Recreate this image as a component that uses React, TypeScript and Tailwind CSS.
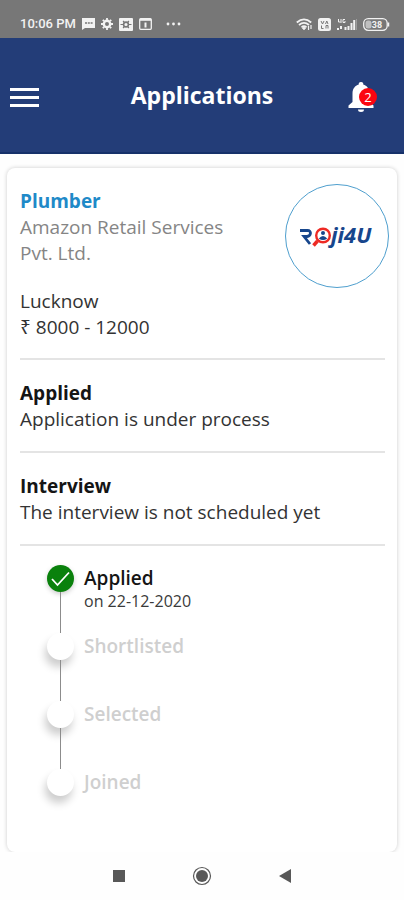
import type { ReactNode } from "react";

const steps = [
  { title: "Applied", note: "on 22-12-2020", done: true },
  { title: "Shortlisted", note: "", done: false },
  { title: "Selected", note: "", done: false },
  { title: "Joined", note: "", done: false },
];

function StatusBar() {
  return (
    <div className="flex h-[38px] flex-none items-center bg-[#777777] pt-2.5 pr-3.5 pl-5 font-['Roboto',sans-serif] text-[#f2f2f2]">
      <span className="text-[13px] leading-4 font-medium">10:06 PM</span>
      <div className="ml-1.5 flex flex-1 items-center gap-1.5">
        <svg width="13" height="12" viewBox="0 0 13 12" aria-hidden>
          <path d="M0 0h13v10H3l-3 2z" fill="currentColor" />
          <path d="M3 5h2M5.8 5h2M8.6 5h2" stroke="#777777" strokeWidth="1.6" />
        </svg>
        <svg width="12" height="12" viewBox="0 0 12 12" fill="none" stroke="currentColor" aria-hidden>
          <circle cx="6" cy="6" r="3.2" strokeWidth="2.4" />
          <path d="M6 0v2M6 10v2M0 6h2M10 6h2M1.8 1.8l1.4 1.4M8.8 8.8l1.4 1.4M10.2 1.8L8.8 3.2M3.2 8.8l-1.4 1.4" strokeWidth="1.8" />
        </svg>
        <svg width="14" height="13" viewBox="0 0 14 13" aria-hidden>
          <rect width="14" height="13" rx="1" fill="currentColor" />
          <circle cx="7" cy="6.5" r="2.4" fill="none" stroke="#777777" strokeWidth="1.6" />
          <path d="M1.500 6.500h3M9.500 6.500h3M4 3l1.500 1.500M10 3L8.500 4.500M4 10l1.500-1.500M10 10L8.500 8.500" fill="none" stroke="#777777" strokeWidth="1.100" />
        </svg>
        <svg width="13" height="12" viewBox="0 0 13 12" fill="none" stroke="currentColor" aria-hidden>
          <rect x="0.7" y="0.7" width="11.6" height="10.6" rx="1" strokeWidth="1.3" />
          <path d="M1 1.8h11" strokeWidth="2" />
          <path d="M6.500 4.500v5" strokeWidth="2" />
        </svg>
        <svg className="ml-2" width="15" height="4" viewBox="0 0 15 4" fill="currentColor" aria-hidden>
          <circle cx="2" cy="2" r="1.4" />
          <circle cx="7.5" cy="2" r="1.4" />
          <circle cx="13" cy="2" r="1.4" />
        </svg>
      </div>
      <div className="flex items-center gap-[5px]">
        <svg width="17" height="13" viewBox="0 0 17 13" fill="none" stroke="currentColor" aria-hidden>
          <path d="M.8 4.500Q8 -1.800 15.200 4.500M3 7Q8 2.800 13 7M5.500 9.300Q8 7 10.500 9.300" strokeWidth="1.800" />
          <path d="M8 8.500l1.800 1.700L8 12l-1.800-1.800z" fill="currentColor" strokeWidth="0.5" />
          <path d="M12.500 8v4M15 7v4" strokeWidth="1.200" />
        </svg>
        <svg width="13" height="13" viewBox="0 0 13 13" aria-hidden>
          <rect width="13" height="13" rx="2.500" fill="currentColor" />
          <path d="M3 3l1.500 3L6 3M7.500 6l1.300-3L10 6M3.500 7.500v3h2M8 10.500v-3h2v3" fill="none" stroke="#777777" strokeWidth="1" />
        </svg>
        <svg width="21" height="13" viewBox="0 0 21 13" fill="none" stroke="currentColor" aria-hidden>
          <path d="M2.500 1v3h2M5 1v4M9 1.500H7v3h2V3" strokeWidth="1" />
          <path d="M2 10v2M5 8v3M9.500 9v3M12.500 8v4M15.500 5v7M18.200 2v10" strokeWidth="2" />
          <path d="M20.500 1v11" strokeWidth="1" opacity="0.300" />
        </svg>
        <svg width="28" height="13" viewBox="0 0 28 13" aria-hidden>
          <rect x="1.700" y="0.700" width="23.500" height="11.600" rx="4.500" fill="none" stroke="currentColor" strokeWidth="1.300" />
          <rect x="3.500" y="2.500" width="6" height="8" rx="2.500" fill="currentColor" opacity="0.600" />
          <path d="M26.500 4.500v4" stroke="currentColor" strokeWidth="1.500" />
          <text x="15" y="10" textAnchor="middle" fontSize="9" fontWeight="700" fill="currentColor">
            38
          </text>
        </svg>
      </div>
    </div>
  );
}

function Header() {
  return (
    <header className="grid h-[116px] flex-none grid-cols-[1fr_auto_1fr] items-center border-b-2 border-[#163169] bg-[#233d78] pr-6 pl-2.5 text-white">
      <button type="button" aria-label="Menu" className="flex w-[30px] flex-col gap-[5px] pt-1">
        <span className="h-[3px] w-[29px] bg-current" />
        <span className="h-[3px] w-[29px] bg-current" />
        <span className="h-[3px] w-[29px] bg-current" />
      </button>
      <h1 className="pl-3.5 text-[23px] leading-8 font-bold">Applications</h1>
      <button type="button" aria-label="Notifications, 2 unread" className="relative mt-1 h-8 w-8 justify-self-end">
        <svg width="32" height="32" viewBox="0 0 32 32" fill="currentColor" aria-hidden>
          <path d="M13 1a2.200 2.200 0 0 1 2.200 2.600C19 4.600 21.500 8 21.500 12.500v8.500l4 3.500V27H.5v-2.500l4-3.500v-8.500C4.500 8 7 4.600 10.800 3.600A2.200 2.200 0 0 1 13 1zM10 28.500h6a3 2.500 0 0 1-6 0z" />
        </svg>
        <span className="absolute top-[7px] left-[11px] flex h-[18px] w-[18px] items-center justify-center rounded-full bg-[#fb0510] text-[13px] leading-none">
          2
        </span>
      </button>
    </header>
  );
}

function CompanyLogo() {
  return (
    <div className="flex h-[104px] w-[104px] flex-none items-center justify-center rounded-full border border-[#4f9fce]">
      <svg width="84" height="40" viewBox="0 0 84 40" role="img" aria-label="Roji4U">
        <path d="M5 14.500h7.500c4.500 0 3.500 5.500-.5 6H9l6 7.500" fill="none" stroke="#17468c" strokeWidth="2.800" />
        <path d="M22.500 25l-4 4.500" stroke="#ee2a24" strokeWidth="3.500" />
        <circle cx="28" cy="19.500" r="6.800" fill="none" stroke="#ee2a24" strokeWidth="2.400" />
        <circle cx="28" cy="17" r="2" fill="#17468c" />
        <path d="M23.800 22.500q4.200-5 8.400 0q-4.200 3-8.400 0z" fill="#17468c" />
        <text x="36" y="27" className="font-['Open_Sans',sans-serif]" fontSize="22" fontWeight="700" fontStyle="italic" fill="#17468c">
          ji4U
        </text>
      </svg>
    </div>
  );
}

function Section({ title, children }: { title: string; children: ReactNode }) {
  return (
    <section className="mr-1 border-t-2 border-[#e4e4e4] pt-5 pb-[19px]">
      <h3 className="font-bold text-[#151515]">{title}</h3>
      <p>{children}</p>
    </section>
  );
}

function Timeline() {
  return (
    <ol className="mr-1 border-t-2 border-[#e4e4e4] pt-[19px] pl-[27px]">
      {steps.map((step, i) => (
        <li key={step.title} className="flex h-[68px] gap-2.5">
          <div className="flex w-[27px] flex-none flex-col items-center">
            <span
              className={`flex h-[27px] w-[27px] flex-none items-center justify-center rounded-full ${
                step.done ? "bg-[#0a810c] shadow-[0_2px_5px_rgba(0,0,0,0.2)]" : "bg-white shadow-[-2px_7px_8px_rgba(0,0,0,0.2)]"
              }`}
            >
              {step.done && (
                <svg width="20" height="16" viewBox="0 0 20 16" fill="none" stroke="white" strokeWidth="1.800" aria-hidden>
                  <path d="M1 8l5.500 6L18 1.500" />
                </svg>
              )}
            </span>
            {i < steps.length - 1 && <span className="w-px flex-1 bg-[#8c8c8c]" />}
          </div>
          <div>
            <p className={`leading-[26px] font-semibold ${step.done ? "text-[#151515]" : "text-[#cfcfcf]"}`}>
              {step.title}
            </p>
            {step.note && <p className="text-[16px] leading-5 text-[#3a3a3a]">{step.note}</p>}
          </div>
        </li>
      ))}
    </ol>
  );
}

function NavBar() {
  return (
    <nav className="flex h-12 flex-none items-center justify-center gap-[66px] bg-[#fefefe] text-[#585858]">
      <button type="button" aria-label="Recent apps">
        <svg width="14" height="14" viewBox="0 0 14 14" aria-hidden>
          <rect x="1" y="1" width="12" height="12" fill="currentColor" />
        </svg>
      </button>
      <button type="button" aria-label="Home">
        <svg width="20" height="20" viewBox="0 0 20 20" aria-hidden>
          <circle cx="10" cy="10" r="8.500" fill="none" stroke="currentColor" strokeWidth="1.200" />
          <circle cx="10" cy="10" r="6" fill="currentColor" />
        </svg>
      </button>
      <button type="button" aria-label="Back">
        <svg width="14" height="14" viewBox="0 0 14 14" aria-hidden>
          <path d="M13 0v14L1 7z" fill="currentColor" />
        </svg>
      </button>
    </nav>
  );
}

export default function App() {
  return (
    <div className="flex min-h-screen flex-col bg-[#fefefe] font-['Open_Sans','Noto_Sans',sans-serif]">
      <StatusBar />
      <Header />
      <main className="flex flex-1 flex-col px-[7px] pt-3.5">
        <article className="flex-1 rounded-lg bg-white pt-4 pr-2 pl-[13px] text-[19px] leading-[26px] text-[#333333] shadow-[0_0_4px_rgba(0,0,0,0.2)]">
          <div className="flex items-start justify-between">
            <div className="max-w-[220px] pt-1 pb-[18px]">
              <h2 className="font-bold text-[#1f8ac8]">Plumber</h2>
              <p className="text-[#858585]">Amazon Retail Services Pvt. Ltd.</p>
              <p className="mt-[22px]">Lucknow</p>
              <p>₹ 8000 - 12000</p>
            </div>
            <CompanyLogo />
          </div>
          <Section title="Applied">Application is under process</Section>
          <Section title="Interview">The interview is not scheduled yet</Section>
          <Timeline />
        </article>
      </main>
      <NavBar />
    </div>
  );
}
